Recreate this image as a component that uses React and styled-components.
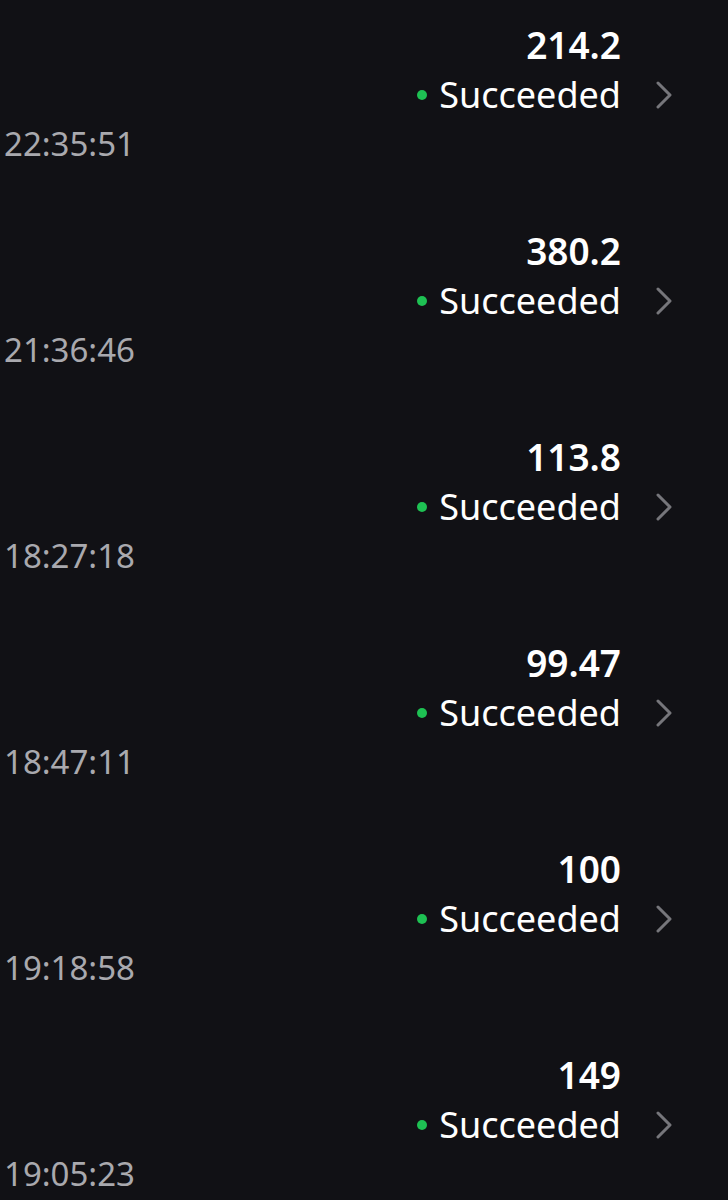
import React from "react";
import styled, { createGlobalStyle } from "styled-components";

const Global = createGlobalStyle`
  html, body { margin: 0; padding: 0; background: #111115; }
  body { font-family: "Noto Sans", "Open Sans", sans-serif; -webkit-font-smoothing: antialiased; }
`;

const List = styled.div`
  display: flex;
  flex-direction: column;
  padding: 22px 0 0 4px;
`;

const Row = styled.div`
  display: flex;
  flex-direction: column;
  height: 206px;
`;

const Right = styled.div`
  display: grid;
  grid-template-columns: auto 51px;
  justify-content: end;
  padding-right: 56px;
  align-items: center;
`;

const Amount = styled.div`
  grid-column: 1;
  justify-self: end;
  color: #ffffff;
  font-size: 37px;
  font-weight: 600;
  line-height: 46px;
`;

const Status = styled.div`
  grid-column: 1;
  display: flex;
  align-items: center;
  gap: 12px;
  color: #ffffff;
  font-size: 36px;
  line-height: 54px;
`;

const Dot = styled.span`
  width: 10px;
  height: 10px;
  border-radius: 50%;
  background: #1ec153;
`;

const Chevron = styled.svg`
  grid-column: 2;
  justify-self: end;
  width: 16px;
  height: 28px;
`;

const Time = styled.div`
  color: #a9a9ae;
  font-size: 33px;
  line-height: 44px;
`;

const rows = [
  ["214.2", "22:35:51"],
  ["380.2", "21:36:46"],
  ["113.8", "18:27:18"],
  ["99.47", "18:47:11"],
  ["100", "19:18:58"],
  ["149", "19:05:23"],
];

export default function App() {
  return (
    <>
      <Global />
      <List>
        {rows.map(([amt, t]) => (
          <Row key={t}>
            <Right>
              <Amount>{amt}</Amount>
              <span />
              <Status>
                <Dot />
                Succeeded
              </Status>
              <Chevron viewBox="0 0 16 28" fill="none">
                <path d="M2 2 L14 14 L2 26" stroke="#76767b" strokeWidth="3" strokeLinecap="round" strokeLinejoin="round" />
              </Chevron>
            </Right>
            <Time>{t}</Time>
          </Row>
        ))}
      </List>
    </>
  );
}
